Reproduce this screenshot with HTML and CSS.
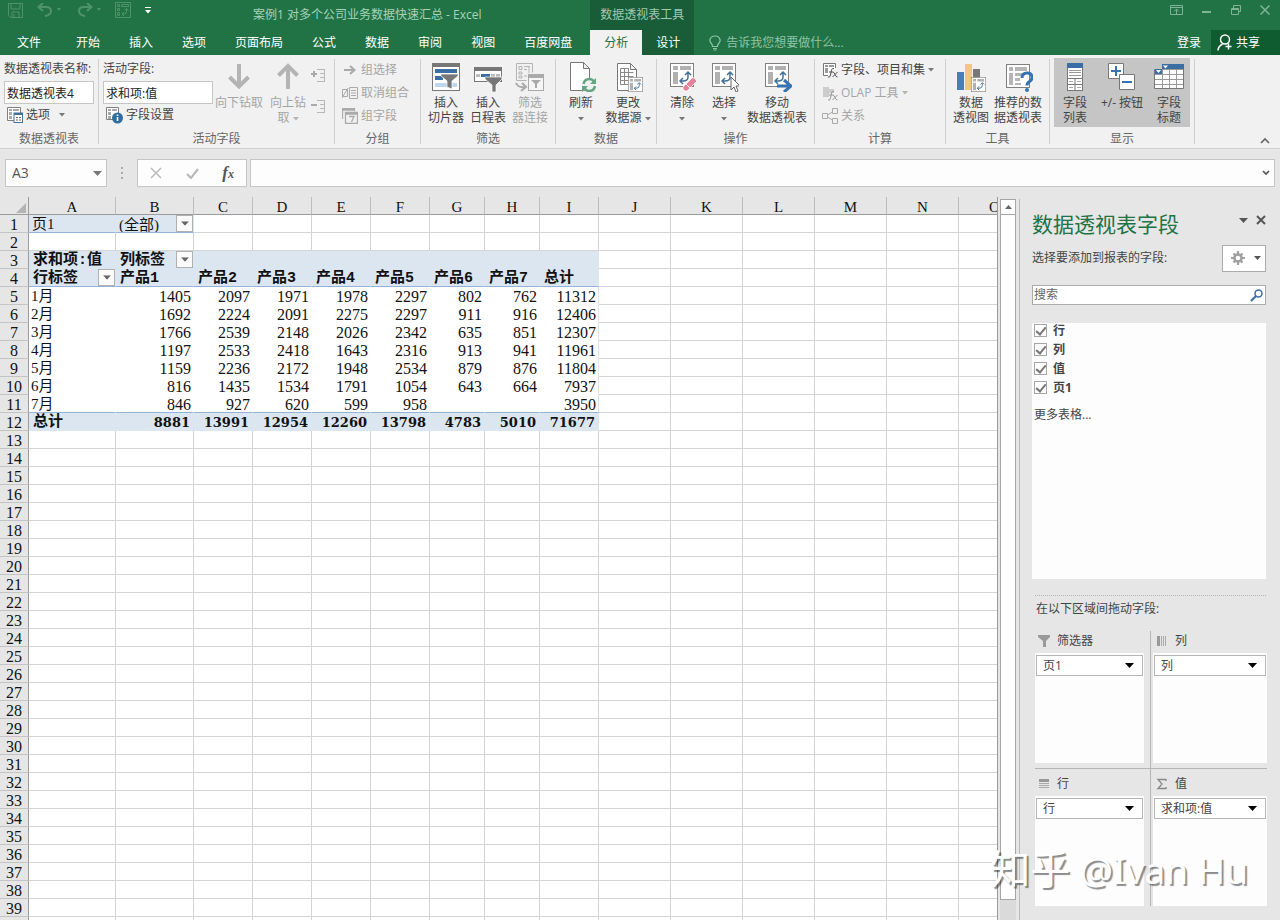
FILE: index.html
```
<!DOCTYPE html>
<html lang="zh-CN">
<head>
<meta charset="utf-8">
<title>案例1 对多个公司业务数据快速汇总 - Excel</title>
<link rel="stylesheet" href="styles.css">
</head>
<body>
<svg class="defs" aria-hidden="true">
  <symbol id="pivot" viewBox="0 0 24 24">
    <rect x=".5" y=".5" width="23" height="23" fill="#fff" stroke="#808080"/>
    <path d="M3 3h5v4H3zM10 3h11v4H10zM3 9h5v12H3z" fill="#b1b1b1"/>
    <path d="M10 18h3q5 0 5-4v-4M13 15l-3 3 3 3M15 12l3-3 3 3" fill="none" stroke="#41719c" stroke-width="1.5"/>
  </symbol>
  <symbol id="caret" viewBox="0 0 6 4"><path d="M0 0h6L3 3.500z" fill="currentColor"/></symbol>
  <symbol id="drop" viewBox="0 0 9 5"><path d="M0 0h9L4.500 5z" fill="currentColor"/></symbol>
</svg>
<div class="app">
  <header class="top">
    <div class="top-left">
      <div class="title-row">
        <div class="qat">
          <button type="button" aria-label="保存"><svg width="15" height="15" viewBox="0 0 15 15"><path d="M.5.5h14v14h-12l-2-2zM3 1v5h9V1M4 14V9h7v5M6 11v3" fill="none" stroke="currentColor"/></svg></button>
          <button type="button" aria-label="撤消" class="undo"><svg width="24" height="14" viewBox="0 0 24 14"><path d="M2 4h7q5 0 5 4t-6 5M6 0L1.500 4 6 8" fill="none" stroke="currentColor" stroke-width="2"/><path d="M20 5h4l-2 3z" fill="currentColor"/></svg></button>
          <button type="button" aria-label="恢复" class="redo"><svg width="24" height="14" viewBox="0 0 24 14"><path d="M14 4H7Q2 4 2 8t6 5M10 0l4.500 4L10 8" fill="none" stroke="currentColor" stroke-width="2"/><path d="M20 5h4l-2 3z" fill="currentColor"/></svg></button>
          <button type="button" aria-label="数据透视表"><svg width="16" height="16" viewBox="0 0 16 16"><path d="M.5.5h15v15H.5zM2.500 2.500h2v2h-2zM6.500 2.500h7v2h-7zM2.500 6.500h2v2h-2zM2.500 10.500h2v3h-2zM7 12h2.500q2 0 2-2V7M9 10l-2 2 2 2M9.500 8.500l2-2 2 2" fill="none" stroke="currentColor"/></svg></button>
          <button type="button" aria-label="自定义快速访问工具栏" class="more"><svg width="6" height="7" viewBox="0 0 6 7"><path d="M0 0h6v1H0zM0 3h6L3 6.500z" fill="currentColor"/></svg></button>
        </div>
        <h1 class="doc-title">案例1 对多个公司业务数据快速汇总 - Excel</h1>
      </div>
      <nav class="tabs">
        <button type="button" class="file">文件</button><button type="button">开始</button><button type="button">插入</button><button type="button">选项</button><button type="button">页面布局</button><button type="button">公式</button><button type="button">数据</button><button type="button">审阅</button><button type="button">视图</button><button type="button">百度网盘</button>
      </nav>
    </div>
    <div class="context">
      <div class="context-title">数据透视表工具</div>
      <nav class="tabs"><button type="button" class="active">分析</button><button type="button">设计</button></nav>
    </div>
    <div class="top-right">
      <div class="win">
        <button type="button" aria-label="功能区显示选项"><svg width="13" height="11" viewBox="0 0 13 11"><path d="M.5.5h12v9H.5zM1 2.500h11M6.500 9V4M4 6.500L6.500 4 9 6.500" fill="none" stroke="currentColor"/></svg></button>
        <button type="button" aria-label="最小化"><svg width="10" height="10" viewBox="0 0 10 10"><path d="M0 6h9v2H0z" fill="currentColor"/></svg></button>
        <button type="button" aria-label="还原"><svg width="10" height="10" viewBox="0 0 10 10"><path d="M.5 3.500h7v6h-7zM2.500 3V.5h7v6H8M0 4.500h8" fill="none" stroke="currentColor"/></svg></button>
        <button type="button" aria-label="关闭"><svg width="10" height="10" viewBox="0 0 10 10"><path d="M.5.5l9 9M9.500.5l-9 9" stroke="currentColor" stroke-width="1.500"/></svg></button>
      </div>
      <div class="tell-row">
        <button type="button" class="tell"><svg width="12" height="16" viewBox="0 0 12 16"><path d="M3.500 11.500q0-2-1.500-3.500Q.5 6.500 1 4.500 2 1 6 1t5 3.500Q11.500 6.500 10 8q-1.500 1.500-1.500 3.500zM4 13.500h4M4.500 15h3" fill="none" stroke="currentColor" stroke-width="1.200"/></svg>告诉我您想要做什么...</button>
        <button type="button" class="login">登录</button>
        <button type="button" class="share"><svg width="16" height="17" viewBox="0 0 16 17"><circle cx="8" cy="5.500" r="4.500" fill="none" stroke="#fff" stroke-width="1.500"/><path d="M1 16.500q0-4 4.500-6.500M8.500 12.500h6M11.500 9.500v6" fill="none" stroke="#fff" stroke-width="1.500"/></svg>共享</button>
      </div>
    </div>
  </header>

  <section class="ribbon" aria-label="分析">
    <div class="group g-name">
      <div class="body">
        <div class="stack">
          <label for="pt-name">数据透视表名称:</label>
          <input id="pt-name" type="text" value="数据透视表4">
          <button type="button" class="row-btn"><svg width="16" height="16" viewBox="0 0 16 16"><path d="M.5.5h13v13H.5z" fill="#fff" stroke="#808080"/><path d="M2 2h3v2H2zM6 2h6v2H6zM2 5h3v3H2zM2 9h3v3H2z" fill="#aaa"/><rect x="7" y="6" width="8.500" height="9.500" fill="#fff" stroke="#41719c"/><path d="M7 6h9v2H7z" fill="#41719c"/><path d="M9 10.500h2M12 10.500h2M9 13h2M12 13h2" stroke="#666"/></svg>选项<svg class="caret wide" width="6" height="4"><use href="#caret"/></svg></button>
        </div>
      </div>
      <div class="name">数据透视表</div>
    </div>
    <div class="group g-field">
      <div class="body">
        <div class="stack">
          <label for="field">活动字段:</label>
          <input id="field" type="text" value="求和项:值">
          <button type="button" class="row-btn"><svg width="17" height="17" viewBox="0 0 17 17"><path d="M.5.5h12v12H.5z" fill="#fff" stroke="#808080"/><path d="M2 2h3v2H2zM6 2h5v2H6zM2 5h3v3H2zM2 9h3v3H2z" fill="#aaa"/><circle cx="11.500" cy="11" r="5.500" fill="#2e6da4"/><path d="M11.500 7.500v1.500M11.500 10v4" stroke="#fff" stroke-width="1.600"/></svg>字段设置</button>
        </div>
        <button type="button" class="big off w50"><svg width="30" height="30" viewBox="0 0 30 30"><path d="M15 2v22M5.500 15l9.500 9.500 9.500-9.500" fill="none" stroke="#b4b4b4" stroke-width="4"/></svg>向下钻取</button>
        <button type="button" class="big off w46"><svg width="30" height="30" viewBox="0 0 30 30"><path d="M15 27V4M5.500 13.500L15 4l9.500 9.500" fill="none" stroke="#b4b4b4" stroke-width="4"/></svg>向上钻<span>取 <svg class="caret" width="6" height="4"><use href="#caret"/></svg></span></button>
        <div class="minis">
          <button type="button" aria-label="展开字段"><svg width="15" height="15" viewBox="0 0 15 15"><path d="M0 5h6M3 2v6" stroke="#aaa" stroke-width="2"/><path d="M6 .5h8M9 4.500h5M9 8.500h5M6 12.500h8M13.500 1v11" stroke="#b8b8b8"/></svg></button>
          <button type="button" aria-label="折叠字段"><svg width="15" height="15" viewBox="0 0 15 15"><path d="M0 5h6" stroke="#aaa" stroke-width="2"/><path d="M6 .5h8M9 4.500h5M9 8.500h5M6 12.500h8M13.500 1v11" stroke="#b8b8b8"/></svg></button>
        </div>
      </div>
      <div class="name">活动字段</div>
    </div>
    <div class="group g-group">
      <div class="body rows">
        <button type="button" class="row-btn off"><svg width="16" height="16" viewBox="0 0 16 16"><path d="M2 8h10M8 4l4.500 4L8 12" fill="none" stroke="#aaa" stroke-width="2"/></svg>组选择</button>
        <button type="button" class="row-btn off"><svg width="16" height="16" viewBox="0 0 16 16"><path d="M7.500 2.500v11M7.500 2.500h8v11h-8M9 5.500h5M9 8h5M9 10.500h5M.5 4.500h5v7h-5zM0 13l6-10" fill="none" stroke="#aaa"/></svg>取消组合</button>
        <button type="button" class="row-btn off"><svg width="16" height="16" viewBox="0 0 16 16"><path d="M.5 11V.5h12V3M.5 2h12M3.500 4.500h12v11h-12zM3.500 6h12M7 8.500h5L9.500 14" fill="none" stroke="#aaa" stroke-width="1.300"/></svg>组字段</button>
      </div>
      <div class="name">分组</div>
    </div>
    <div class="group g-filter">
      <div class="body">
        <button type="button" class="big w42"><svg width="30" height="30" viewBox="0 0 30 30"><rect x="1.500" y="1.500" width="27" height="27" fill="#fff" stroke="#777"/><path d="M1 1h28v4H1z" fill="#777"/><path d="M4 7h22v4H4zM4 14h8v4H4z" fill="#3b6ea5"/><path d="M4 21h22v4H4z" fill="#bdd7ee"/><path d="M10 12h17v2l-6 5v8l-5-2v-6l-6-5z" fill="#777" stroke="#fff" stroke-width=".7"/></svg>插入<span>切片器</span></button>
        <button type="button" class="big w42"><svg width="30" height="30" viewBox="0 0 30 30"><rect x="1.500" y="5.500" width="27" height="14" fill="#fff" stroke="#777"/><path d="M1 5h28v4H1z" fill="#777"/><path d="M3 12h4v3H3zM18 12h4v3h-4zM23 12h4v3h-4z" fill="#bbb"/><path d="M8 12h9v3H8z" fill="#3b6ea5"/><path d="M12 15h17v2l-6 6v7h-4v-7l-7-6z" fill="#777" stroke="#fff" stroke-width=".7"/></svg>插入<span>日程表</span></button>
        <button type="button" class="big off w42"><svg width="30" height="30" viewBox="0 0 30 30"><path d="M1.500 1.500h16v9M1.500 1.500v17h10M4 4.500h3v3H4zM9 4.500h6M9 7.500h3M4 10h3v2H4zM4 14h3v2H4zM14 11V5M9 14h3" fill="none" stroke="#b4b4b4"/><rect x="13.500" y="12.500" width="15" height="16" fill="#f6f6f6" stroke="#aaa"/><path d="M13 12h16v4H13z" fill="#aaa"/><path d="M16 18h10l-4 4v4h-2v-4z" fill="#aaa"/><path d="M1 21q2 5 9 4M7 21l4 4-5 4" fill="none" stroke="#aaa" stroke-width="2"/></svg>筛选<span>器连接</span></button>
      </div>
      <div class="name">筛选</div>
    </div>
    <div class="group g-data">
      <div class="body">
        <button type="button" class="big w42"><svg width="30" height="30" viewBox="0 0 30 30"><path d="M4.500.5h13l6 6v22h-19zM17.500.5v6h6" fill="#fff" stroke="#777"/><circle cx="23" cy="23" r="7" fill="#f1f1f1"/><path d="M17.500 22q1-5 6-5 3 0 4.500 3M29 24q-1 5-6 5-3 0-4.500-3" fill="none" stroke="#63a583" stroke-width="2.500"/><path d="M30 16v6h-6zM16 30v-6h6z" fill="#63a583"/></svg>刷新<span><svg class="caret" width="6" height="4"><use href="#caret"/></svg></span></button>
        <button type="button" class="big w50"><svg width="30" height="30" viewBox="0 0 30 30"><path d="M4.500 1.500h13l6 6v21h-19zM17.500 1.500v6h6" fill="#fff" stroke="#777"/><path d="M7.500 6.500h8M7.500 10.500h13M7.500 14.500h13M7.500 18.500h10M7.500 22.500h8M7.500 6.500v16M11.500 6.500v16M15.500 6.500v16" fill="none" stroke="#888"/><svg x="15" y="15" width="15" height="15"><use href="#pivot"/></svg></svg>更改<span>数据源 <svg class="caret" width="6" height="4"><use href="#caret"/></svg></span></button>
      </div>
      <div class="name">数据</div>
    </div>
    <div class="group g-op">
      <div class="body">
        <button type="button" class="big w42"><svg width="30" height="30" viewBox="0 0 30 30"><svg x="3" y="1" width="24" height="24"><use href="#pivot"/></svg><path d="M16 25l9-9q1-1 2 0l3 3-10 10h-2l-2-2z" fill="#e8829a" stroke="#fff" stroke-width=".7"/><path d="M19 22l4 4" stroke="#fff"/></svg>清除<span><svg class="caret" width="6" height="4"><use href="#caret"/></svg></span></button>
        <button type="button" class="big w42"><svg width="30" height="30" viewBox="0 0 30 30"><svg x="3" y="1" width="24" height="24"><use href="#pivot"/></svg><path d="M22 15v13l3-3 2 5 2-1-2-5h4z" fill="#fff" stroke="#666"/></svg>选择<span><svg class="caret" width="6" height="4"><use href="#caret"/></svg></span></button>
        <button type="button" class="big w64"><svg width="30" height="30" viewBox="0 0 30 30"><svg x="3" y="1" width="24" height="24"><use href="#pivot"/></svg><path d="M15 24h13M22 18l7 6-7 6" fill="none" stroke="#3573b1" stroke-width="3"/></svg>移动<span>数据透视表</span></button>
      </div>
      <div class="name">操作</div>
    </div>
    <div class="group g-calc">
      <div class="body rows">
        <button type="button" class="row-btn"><svg width="16" height="16" viewBox="0 0 16 16"><path d="M6 13.500H1.500v-12h12V6" fill="#fff" stroke="#777"/><path d="M3 3h3v2H3zM7 3h5v2H7zM3 6h3v5H3z" fill="#999"/><path d="M6 15q2 1 2.500-2l1-5q.5-2 2.500-1.500M7 10h4M11 10q1 0 2 2.500t2.500 2.500M15.500 10l-5 5" fill="none" stroke="#555"/></svg>字段、项目和集<svg class="caret" width="6" height="4"><use href="#caret"/></svg></button>
        <button type="button" class="row-btn off"><svg width="16" height="16" viewBox="0 0 16 16"><path d="M1 2h6v10H1zM7 4h5v4H7z" fill="#ccc"/><path d="M6 15q2 1 2.500-2l1-5q.5-2 2.500-1.500M7 10h4M11 10q1 0 2 2.500t2.500 2.500M15.500 10l-5 5" fill="none" stroke="#999"/></svg>OLAP 工具<svg class="caret" width="6" height="4"><use href="#caret"/></svg></button>
        <button type="button" class="row-btn off"><svg width="16" height="16" viewBox="0 0 16 16"><path d="M.5 5.500h5v5h-5zM10.500.5h5v5h-5zM10.500 10.500h5v5h-5zM5.500 7l5-3M5.500 9l5 3" fill="none" stroke="#aaa"/></svg>关系</button>
      </div>
      <div class="name">计算</div>
    </div>
    <div class="group g-tool">
      <div class="body">
        <button type="button" class="big w42"><svg width="30" height="30" viewBox="0 0 30 30"><path d="M1 10h7v18H1z" fill="#4a7ebb"/><path d="M9 2h7v26H9z" fill="#edc87e"/><path d="M17 7h7v10h-7z" fill="#777"/><svg x="15" y="15" width="15" height="15"><use href="#pivot"/></svg></svg>数据<span>透视图</span></button>
        <button type="button" class="big w52"><svg width="30" height="30" viewBox="0 0 30 30"><rect x="3.500" y="2.500" width="23" height="23" fill="#fff" stroke="#808080"/><path d="M6 5h4v4H6zM12 5h12v4H12zM6 11h4v12H6zM12 11h8v3h-8zM12 16h5v3h-5zM12 21h6v2h-6z" fill="#b5b5b5"/><path d="M19 16q0-5 5-5t5 4.500q0 2.500-2.500 4-2.500 1.500-2.500 4" fill="none" stroke="#3573b1" stroke-width="3"/><circle cx="24" cy="28" r="2" fill="#3573b1"/></svg><span>推荐的数</span><span>据透视表</span></button>
      </div>
      <div class="name">工具</div>
    </div>
    <div class="group g-show">
      <div class="body">
        <button type="button" class="big on w42" aria-pressed="true"><svg width="30" height="30" viewBox="0 0 30 30"><rect x="7.500" y="1.500" width="15" height="27" fill="#fff" stroke="#777"/><path d="M7 1h16v5H7z" fill="#3b6ea5"/><path d="M9 8.500h12M9 10.500h12M9 13.500h12" stroke="#999"/><path d="M8 16.500h14M15 17v11M8 22.500h14" stroke="#777"/><path d="M9 19.500h4M17 19.500h4M9 25.500h4M17 25.500h4" stroke="#aaa"/></svg>字段<span>列表</span></button>
        <button type="button" class="big on w52" aria-pressed="true"><svg width="30" height="30" viewBox="0 0 30 30"><path d="M1.500 1.500h15v15h-15z" fill="#fff" stroke="#777"/><path d="M12.500 12.500h15v15h-15z" fill="#fff" stroke="#777"/><path d="M4 9h10M9 4v10M15 20h10" stroke="#3573b1" stroke-width="2"/></svg>+/- 按钮</button>
        <button type="button" class="big on w42" aria-pressed="true"><svg width="30" height="30" viewBox="0 0 30 30"><path d="M8.500 2.500h21v24H.5v-19h8z" fill="#fff" stroke="#777"/><path d="M8 2h22v5H8zM1 7h7v5H1z" fill="#3b6ea5"/><path d="M1 12.500h28M1 17.500h28M1 22.500h28M8.500 7v19M15.500 7v19M22.500 7v19M8 7.500h21" stroke="#999"/><path d="M9 3.500h5l-2.500 3zM2 8h5l-2.500 3z" fill="#fff"/></svg>字段<span>标题</span></button>
      </div>
      <div class="name">显示</div>
    </div>
    <button type="button" class="collapse" aria-label="折叠功能区"><svg width="10" height="7" viewBox="0 0 10 7"><path d="M1 6l4-4 4 4" fill="none" stroke="#666" stroke-width="1.700"/></svg></button>
  </section>

  <div class="formula">
    <div class="namebox"><input type="text" aria-label="名称框" value="A3"><svg width="9" height="5"><use href="#drop"/></svg></div>
    <svg class="dots" width="3" height="12" viewBox="0 0 3 12"><path d="M0 0h2v2H0zM0 5h2v2H0zM0 10h2v2H0z" fill="#aaa"/></svg>
    <div class="fx">
      <button type="button" aria-label="取消"><svg width="12" height="12" viewBox="0 0 12 12"><path d="M1 1l10 10M11 1L1 11" stroke="#bbb" stroke-width="1.500"/></svg></button>
      <button type="button" aria-label="输入"><svg width="13" height="11" viewBox="0 0 13 11"><path d="M1 6l4 4 7-9" fill="none" stroke="#bbb" stroke-width="2.200"/></svg></button>
      <button type="button" class="fx-btn" aria-label="插入函数"><i>f</i><small>x</small></button>
    </div>
    <div class="fbar"><input type="text" aria-label="编辑栏"><svg width="8" height="6" viewBox="0 0 8 6"><path d="M1 1l3 3 3-3" fill="none" stroke="#555" stroke-width="1.700"/></svg></div>
  </div>

  <main class="work">
    <div class="sheet"><table id="grid"></table></div>
    <div class="scroll" aria-hidden="true">
      <div class="up"><svg width="7" height="4" viewBox="0 0 7 4"><path d="M0 4h7L3.500 0z" fill="#666"/></svg></div>
      <div class="thumb"></div>
      <div class="track"></div>
    </div>
    <aside class="pane">
      <div class="pane-head">
        <h2>数据透视表字段</h2>
        <button type="button" aria-label="任务窗格选项"><svg width="9" height="5"><use href="#drop"/></svg></button>
        <button type="button" aria-label="关闭窗格"><svg width="10" height="10" viewBox="0 0 10 10"><path d="M1 1l8 8M9 1L1 9" stroke="#555" stroke-width="2"/></svg></button>
      </div>
      <div class="pick">
        <span>选择要添加到报表的字段:</span>
        <button type="button" class="gear" aria-label="工具"><svg width="14" height="14" viewBox="0 0 14 14"><path d="M7 0v14M0 7h14M2.500 2.500l9 9M11.500 2.500l-9 9" stroke="#a0a0a0" stroke-width="2.200"/><circle cx="7" cy="7" r="3.600" fill="#fff" stroke="#a0a0a0" stroke-width="2.500"/></svg><svg width="7" height="4" viewBox="0 0 7 4"><path d="M0 0h7L3.500 4z" fill="#555"/></svg></button>
      </div>
      <div class="search"><input type="text" placeholder="搜索" aria-label="搜索"><svg width="13" height="13" viewBox="0 0 13 13"><circle cx="8.500" cy="4.500" r="3.500" fill="none" stroke="#3b6ea5" stroke-width="1.500"/><path d="M6 7l-5 5" stroke="#3b6ea5" stroke-width="2.200"/></svg></div>
      <div class="fields">
        <label><input type="checkbox" checked>行</label>
        <label><input type="checkbox" checked>列</label>
        <label><input type="checkbox" checked>值</label>
        <label><input type="checkbox" checked>页1</label>
        <button type="button">更多表格...</button>
      </div>
      <p class="drag">在以下区域间拖动字段:</p>
      <div class="zones">
        <section class="zone">
          <label for="z1"><svg width="12" height="12" viewBox="0 0 12 12"><path d="M0 0h12v2L8 6v6H5V6L0 2z" fill="#999"/></svg>筛选器</label>
          <div class="well"><div class="pill"><select id="z1"><option>页1</option></select><svg width="9" height="5"><use href="#drop"/></svg></div></div>
        </section>
        <section class="zone right">
          <label for="z2"><svg width="12" height="12" viewBox="0 0 12 12"><path d="M1 1h3v10H1z" fill="#999"/><path d="M5.500 1v10M7.500 1v10M9.500 1v10" stroke="#aaa"/></svg>列</label>
          <div class="well"><div class="pill"><select id="z2"><option>列</option></select><svg width="9" height="5"><use href="#drop"/></svg></div></div>
        </section>
        <section class="zone low">
          <label for="z3"><svg width="12" height="12" viewBox="0 0 12 12"><path d="M1 1h10v3H1z" fill="#999"/><path d="M1 5.500h10M1 7.500h10M1 9.500h10" stroke="#aaa"/></svg>行</label>
          <div class="well"><div class="pill"><select id="z3"><option>行</option></select><svg width="9" height="5"><use href="#drop"/></svg></div></div>
        </section>
        <section class="zone right low">
          <label for="z4"><svg width="12" height="12" viewBox="0 0 12 12"><path d="M10 3V1.500H2L6 6l-4 4.500h8V9" fill="none" stroke="#888" stroke-width="1.300"/></svg>值</label>
          <div class="well"><div class="pill"><select id="z4"><option>求和项:值</option></select><svg width="9" height="5"><use href="#drop"/></svg></div></div>
        </section>
      </div>
    </aside>
  </main>
  <div class="mark"><span>知乎</span> @Ivan Hu</div>
</div>
<script src="grid.js"></script>
</body>
</html>
```
FILE: styles.css
```
* { box-sizing: border-box; }
body {
  margin: 0;
  font: 12px/16px "Open Sans", "Noto Sans CJK SC", sans-serif;
  color: #444;
  background: #e6e6e6;
}
button, input, select { font: inherit; color: inherit; margin: 0; padding: 0; border: 0; background: none; border-radius: 0; outline: 0; }
h1, h2, p { margin: 0; font-weight: normal; }
svg { display: block; flex: none; }
.defs { position: absolute; width: 0; height: 0; }
.app { display: flex; flex-direction: column; height: 100vh; overflow: hidden; position: relative; }

/* title bar and tabs */
.top { display: flex; background: #217346; color: #fff; height: 55px; flex: none; }
.top-left, .top-right { display: flex; flex-direction: column; }
.top-left { padding-right: 4px; }
.title-row { display: flex; height: 30px; align-items: center; }
.qat { display: flex; align-items: center; padding: 0 0 10px 8px; height: 30px; color: #4f9469; gap: 14px; }
.qat .redo { padding-left: 2px; }
.qat .more { color: #fff; }
.doc-title { font-size: 12px; color: #a7d3b8; margin-left: 102px; white-space: nowrap; }
.tabs { display: flex; gap: 1px; height: 25px; }
.tabs button { padding: 0 14px; height: 25px; white-space: nowrap; }
.tabs .file { padding: 0 20px 0 17px; }
.context { background: #195c38; }
.context .tabs { gap: 0; }
.context-title { height: 30px; line-height: 30px; text-align: center; color: #9fc9b0; }
.tabs .active { background: #f1f1f1; color: #217346; }
.top-right { flex: 1; }
.win { height: 30px; display: flex; justify-content: flex-end; align-items: center; gap: 19px; padding: 0 10px 10px 0; color: #7fb595; }
.tell-row { display: flex; height: 25px; align-items: center; }
.tell { display: flex; align-items: center; gap: 5px; margin: 0 auto 0 15px; color: #8fc3a5; }
.share { display: flex; align-items: center; gap: 3px; background: #0f5c31; height: 25px; padding: 0 20px 0 6px; margin-left: 10px; }

/* ribbon */
.ribbon { display: flex; background: #f1f1f1; height: 94px; border-bottom: 1px solid #cfcfcf; flex: none; }
.group { position: relative; display: flex; flex-direction: column; padding-left: 4px; }
.group::after { content: ""; position: absolute; right: 0; top: 4px; bottom: 4px; border-right: 1px solid #d0d0d0; }
.body { display: flex; height: 75px; }
.name { text-align: center; color: #666; line-height: 18px; padding-right: 5px; }
.g-name { width: 99px; } .g-field { width: 236px; } .g-group { width: 86px; }
.g-filter { width: 135px; } .g-data { width: 101px; } .g-op { width: 158px; }
.g-calc { width: 131px; } .g-tool { width: 104px; } .g-show { width: 145px; }
.stack { display: flex; flex-direction: column; padding-top: 5px; }
.stack label { line-height: 17px; margin-bottom: 4px; white-space: nowrap; }
.stack input { height: 23px; border: 1px solid #c6c6c6; background: #fff; color: #222; padding: 0 2px; width: 90px; }
.g-field .stack input { width: 110px; }
.stack .row-btn { margin-left: 3px; }
.row-btn { display: flex; align-items: center; gap: 3px; height: 22px; white-space: nowrap; }
.row-btn .wide { margin-left: 6px; }
.caret { color: #777; display: inline-block; vertical-align: middle; }
.off { color: #a5a5a5; }
.off .caret { color: #b5b5b5; }
.rows { flex-direction: column; padding: 4px 0 0 3px; gap: 1px; }
.big { display: flex; flex-direction: column; align-items: center; line-height: 15px; padding-top: 7px; text-align: center; white-space: nowrap; }
.big > svg { margin-bottom: 3px; }
.big span { display: block; white-space: nowrap; }
.w42 { width: 42px; } .w46 { width: 46px; } .w50 { width: 52px; } .w52 { width: 52px; } .w64 { width: 64px; }
.on { background: #c5c5c5; height: 69px; margin-top: 3px; padding-top: 4px; }
.minis { display: flex; flex-direction: column; gap: 16px; padding: 14px 0 0 0; }
.collapse { margin: auto 10px 4px auto; }

/* formula bar */
.formula { display: flex; align-items: center; height: 48px; padding: 0 5px; flex: none; color: #555; }
.namebox, .fx, .fbar { display: flex; align-items: center; height: 28px; border: 1px solid #c6c6c6; background: #fdfdfd; }
.namebox { width: 102px; padding: 0 4px 0 6px; font-size: 14px; }
.namebox svg { color: #777; }
.namebox input { flex: 1; min-width: 0; }
.dots { margin: 0 13px 0 14px; }
.fx { width: 110px; justify-content: space-between; padding: 0 12px; margin-right: 3px; }
.fx-btn { font-family: "Liberation Serif", serif; font-weight: bold; font-size: 17px; }
.fx-btn small { font-size: 12px; font-style: italic; }
.fbar { flex: 1; padding: 0 4px; }
.fbar input { flex: 1; }

/* worksheet */
.work { display: flex; flex: 1; min-height: 0; }
.sheet { flex: 1; min-width: 0; overflow: hidden; border-right: 1px solid #9b9b9b; }
#grid { table-layout: fixed; width: 1031px; border-collapse: separate; border-spacing: 0; color: #111; font: 15px/15px "Liberation Serif", "Noto Sans CJK SC", serif; }
#grid th, #grid td { padding: 2px 0 0; height: 18px; overflow: hidden; white-space: nowrap; }
#grid th { background: #e6e6e6; font-weight: normal; text-align: center; }
#grid thead th { border-right: 1px solid #bdbdbd; border-bottom: 1px solid #9b9b9b; line-height: 14px; padding-top: 3px; }
#grid thead .corner { border-right-color: #9b9b9b; }
.corner svg { margin: 2px 2px 0 auto; }
#grid tbody th { border-right: 1px solid #9b9b9b; border-bottom: 1px solid #c4c4c4; font-size: 16px; }
#grid td { background: #fff; border-right: 1px solid #d4d4d4; border-bottom: 1px solid #d4d4d4; }
#grid .p { border-color: #fff; padding: 2px 2px 0; }
#grid .fill { background: #dce6f1; border-color: #dce6f1; padding: 2px 3px 0; }
#grid .num { text-align: right; font-size: 16px; }
#grid .line { border-bottom-color: #95b3d7; }
#grid .edge { border-right-color: #e2e2e2; }
#grid .bold { font: bold 15px/14px "Liberation Mono", "Noto Sans CJK SC", monospace; padding: 3px 3px 0 4px; }
#grid .bold.num { font: bold 13px/14px "DejaVu Serif", serif; }
#grid .has-drop { padding-top: 0; padding-right: 0; }
.with-drop { display: flex; justify-content: space-between; align-items: center; height: 17px; }
.with-drop span { padding-top: 3px; }
.with-drop button { width: 17px; height: 17px; border: 1px solid #b0b0b0; background: #fafafa; color: #666; display: flex; align-items: center; justify-content: center; }
.scroll { width: 16px; margin: 2px 3px 0 2px; display: flex; flex-direction: column; }
.up { height: 16px; border: 1px solid #a6a6a6; background: #fff; display: flex; align-items: center; justify-content: center; }
.thumb { flex: 1; border: 1px solid #a6a6a6; border-top: 0; background: #fff; }
.track { height: 20px; background: #dadada; }

/* field pane */
.pane { width: 261px; border-left: 1px solid #bcbcbc; padding: 0 14px 14px 12px; display: flex; flex-direction: column; margin-top: 2px; }
.pane-head { display: flex; align-items: flex-start; gap: 8px; height: 43px; padding-top: 10px; }
.pane-head h2 { font-size: 21px; line-height: 30px; color: #217346; margin-right: auto; }
.pane-head button { color: #555; height: 22px; }
.pick { display: flex; justify-content: space-between; align-items: center; height: 32px; white-space: nowrap; }
.gear { width: 44px; height: 27px; border: 1px solid #ababab; background: #fff; display: flex; align-items: center; justify-content: center; gap: 9px; padding-left: 4px; }
.search { display: flex; align-items: center; border: 1px solid #ababab; background: #fff; height: 20px; margin-top: 11px; padding: 0 2px 0 1px; }
.search input { flex: 1; min-width: 0; }
.search input::placeholder { color: #666; opacity: 1; }
.fields { flex: 1; background: #fdfdfd; margin-top: 18px; padding: 0 2px; display: flex; flex-direction: column; align-items: flex-start; }
.fields label { display: flex; align-items: center; gap: 6px; height: 19px; font-weight: bold; }
.fields label:first-child { margin-top: -2px; }
.fields input { appearance: none; width: 13px; height: 13px; border: 1px solid #a6a6a6; background: #fff; display: grid; place-items: center; }
.fields input:checked::after { content: ""; width: 4px; height: 8px; margin-top: -2px; border: solid #777; border-width: 0 2px 2px 0; transform: rotate(40deg); }
.fields button { margin-top: 10px; }
.drag { border-top: 1px dotted #b5b5b5; margin: 16px 0 0 3px; padding: 5px 0 3px 1px; }
.zones { display: grid; grid-template-columns: 115px 1fr; margin: 11px -1px 0 3px; }
.zone { padding: 1px 6px 5px 0; }
.zone.right { border-left: 1px solid #b5b5b5; padding: 1px 0 5px 2px; }
.zone.low { border-top: 1px solid #b5b5b5; padding-top: 6px; padding-bottom: 0; }
.zone > label { display: flex; align-items: center; gap: 7px; padding-left: 3px; height: 18px; margin-bottom: 3px; }
.well { background: #fdfdfd; height: 110px; padding: 2px 1px 0; }
.pill { display: flex; align-items: center; position: relative; }
.pill select { appearance: none; width: 100%; height: 21px; border: 1px solid #b5b5b5; background: #fff; padding-left: 6px; }
.pill svg { position: absolute; right: 9px; color: #000; pointer-events: none; }

.mark { position: absolute; right: 32px; bottom: 28px; font: 37px/44px "Noto Sans", "Noto Sans CJK SC", sans-serif; color: #fff; text-shadow: 2px 2px 1px rgba(0,0,0,.45); white-space: nowrap; pointer-events: none; }
.mark span { font-size: 40px; }
```
FILE: grid.js
```
const widths = [29, 87, 78, 59, 59, 59, 59, 55, 55, 59, 72, 72, 72, 72, 72, 72];
const letters = "ABCDEFGHIJKLMNO".split("");
const cells = {
  1: ["页1", "(全部)"],
  3: ["求和项:值", "列标签"],
  4: ["行标签", "产品1", "产品2", "产品3", "产品4", "产品5", "产品6", "产品7", "总计"],
  5: ["1月", 1405, 2097, 1971, 1978, 2297, 802, 762, 11312],
  6: ["2月", 1692, 2224, 2091, 2275, 2297, 911, 916, 12406],
  7: ["3月", 1766, 2539, 2148, 2026, 2342, 635, 851, 12307],
  8: ["4月", 1197, 2533, 2418, 1643, 2316, 913, 941, 11961],
  9: ["5月", 1159, 2236, 2172, 1948, 2534, 879, 876, 11804],
  10: ["6月", 816, 1435, 1534, 1791, 1054, 643, 664, 7937],
  11: ["7月", 846, 927, 620, 599, 958, "", "", 3950],
  12: ["总计", 8881, 13991, 12954, 12260, 13798, 4783, 5010, 71677]
};
const drops = ["B1", "B3", "A4"];
const rowCount = 39;
const button = '<button type="button" aria-label="筛选"><svg width="8" height="5" viewBox="0 0 9 5"><use href="#drop"/></svg></button>';

function cellClass(row, col, value) {
  const list = [];
  if (row === 1 && col < 2) list.push("p", "fill", "line");
  if (row >= 3 && row <= 12 && col < 9) {
    list.push("p");
    if (row < 5 || row === 12) list.push("fill", "bold");
    else if (col === 8) list.push("edge");
    if (row === 4 || row === 11) list.push("line");
  }
  if (typeof value === "number") list.push("num");
  if (drops.includes(letters[col] + row)) list.push("has-drop");
  return list.join(" ");
}

let html = "<colgroup>" + widths.map(w => `<col style="width:${w}px">`).join("") + "</colgroup>";
html += '<thead><tr><th class="corner"><svg width="10" height="10" viewBox="0 0 10 10"><path d="M10 0v10H0z" fill="#b4b4b4"/></svg></th>';
html += letters.map(l => `<th scope="col">${l}</th>`).join("") + "</tr></thead><tbody>";
for (let row = 1; row <= rowCount + 1; row++) {
  html += `<tr><th scope="row">${row <= rowCount ? row : ""}</th>`;
  letters.forEach((letter, col) => {
    const value = (cells[row] || [])[col] ?? "";
    const inner = drops.includes(letter + row) ? `<div class="with-drop"><span>${value}</span>${button}</div>` : value;
    html += `<td class="${cellClass(row, col, value)}">${inner}</td>`;
  });
  html += "</tr>";
}
document.getElementById("grid").innerHTML = html + "</tbody>";
```
